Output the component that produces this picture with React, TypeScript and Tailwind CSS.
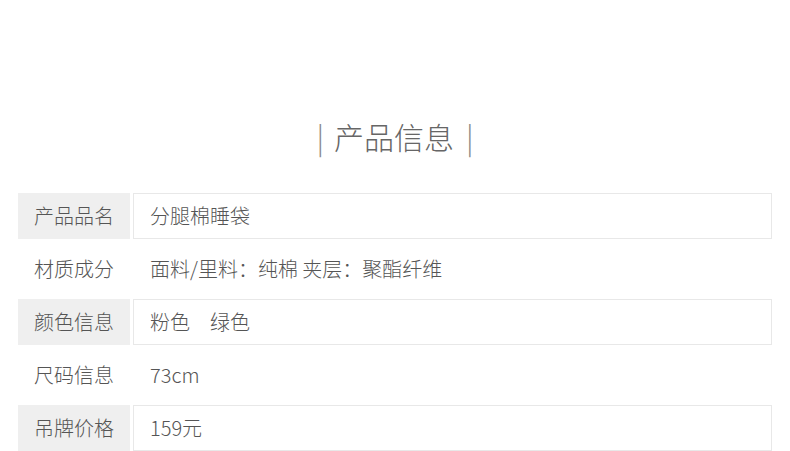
const rows = [
  { label: "产品品名", value: "分腿棉睡袋", boxed: true },
  { label: "材质成分", value: "面料/里料：纯棉 夹层：聚酯纤维", boxed: false },
  { label: "颜色信息", value: "粉色\u3000绿色", boxed: true },
  { label: "尺码信息", value: "73cm", boxed: false },
  { label: "吊牌价格", value: "159元", boxed: true },
];

export default function App() {
  return (
    <div
      className="h-[451px] w-[790px] overflow-hidden bg-white font-light text-[#555]"
      style={{ fontFamily: '"Noto Sans CJK SC", "Noto Sans", sans-serif' }}
    >
      <h2 className="flex h-[193px] items-center justify-center pt-[78px] text-[30px] font-light leading-none text-[#666]">
        <span className="mr-[10px] text-[#888]">|</span>
        产品信息
        <span className="ml-3 text-[#888]">|</span>
      </h2>
      <ul className="flex flex-col gap-[7px] px-[18px]">
        {rows.map((row) => (
          <li key={row.label} className="flex h-[46px] gap-[3px]">
            <div
              className={
                "flex w-[112px] shrink-0 items-center pl-[16px] text-[20px] " +
                (row.boxed ? "bg-[#efefef]" : "")
              }
            >
              {row.label}
            </div>
            <div
              className={
                "flex flex-1 items-center pl-[16px] text-[20px] " +
                (row.boxed ? "border border-[#e8e8e8]" : "border border-transparent")
              }
            >
              {row.value}
            </div>
          </li>
        ))}
      </ul>
    </div>
  );
}
